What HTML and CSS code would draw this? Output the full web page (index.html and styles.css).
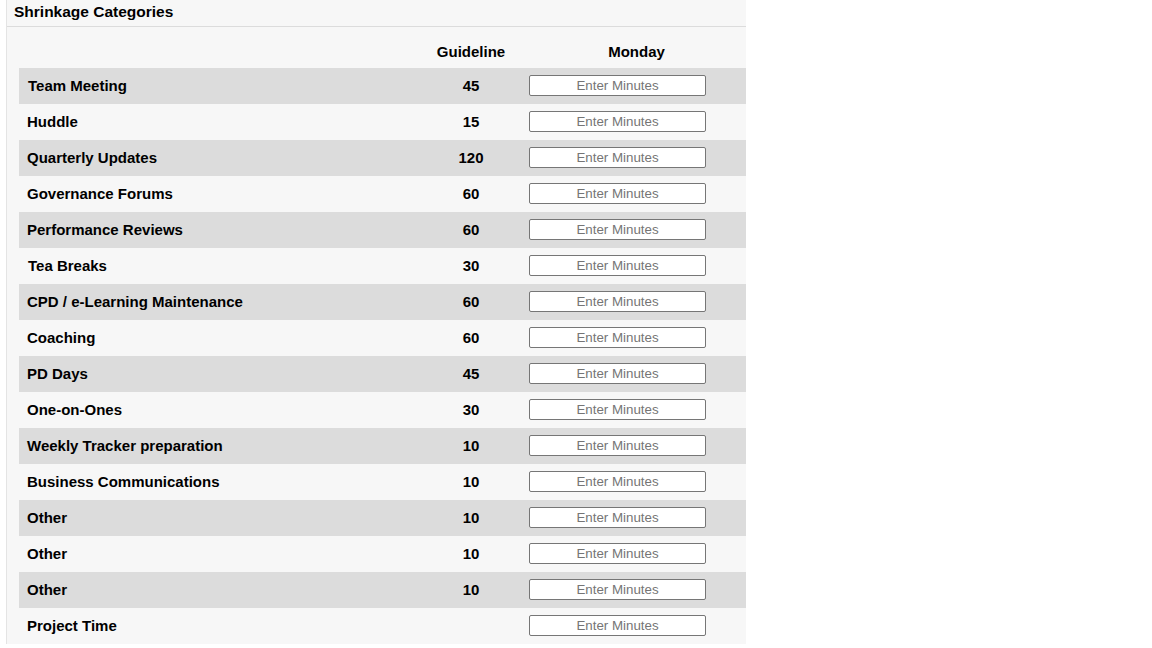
FILE: index.html
```html
<!DOCTYPE html>
<html>
<head>
<meta charset="utf-8">
<link rel="stylesheet" href="styles.css">
</head>
<body>
<div class="panel">
  <div class="panel-title">Shrinkage Categories</div>
  <div class="panel-body">
    <div class="grid">
      <div class="row head">
        <div class="c-name"></div>
        <div class="c-guide">Guideline</div>
        <div class="c-day">Monday</div>
      </div>
      <div class="row alt"><div class="c-name wide">Team Meeting</div><div class="c-guide">45</div><div class="c-input"><input type="text" placeholder="Enter Minutes"></div></div>
      <div class="row"><div class="c-name">Huddle</div><div class="c-guide">15</div><div class="c-input"><input type="text" placeholder="Enter Minutes"></div></div>
      <div class="row alt"><div class="c-name">Quarterly Updates</div><div class="c-guide">120</div><div class="c-input"><input type="text" placeholder="Enter Minutes"></div></div>
      <div class="row"><div class="c-name">Governance Forums</div><div class="c-guide">60</div><div class="c-input"><input type="text" placeholder="Enter Minutes"></div></div>
      <div class="row alt"><div class="c-name">Performance Reviews</div><div class="c-guide">60</div><div class="c-input"><input type="text" placeholder="Enter Minutes"></div></div>
      <div class="row"><div class="c-name wide">Tea Breaks</div><div class="c-guide">30</div><div class="c-input"><input type="text" placeholder="Enter Minutes"></div></div>
      <div class="row alt"><div class="c-name">CPD / e-Learning Maintenance</div><div class="c-guide">60</div><div class="c-input"><input type="text" placeholder="Enter Minutes"></div></div>
      <div class="row"><div class="c-name">Coaching</div><div class="c-guide">60</div><div class="c-input"><input type="text" placeholder="Enter Minutes"></div></div>
      <div class="row alt"><div class="c-name">PD Days</div><div class="c-guide">45</div><div class="c-input"><input type="text" placeholder="Enter Minutes"></div></div>
      <div class="row"><div class="c-name">One-on-Ones</div><div class="c-guide">30</div><div class="c-input"><input type="text" placeholder="Enter Minutes"></div></div>
      <div class="row alt"><div class="c-name">Weekly Tracker preparation</div><div class="c-guide">10</div><div class="c-input"><input type="text" placeholder="Enter Minutes"></div></div>
      <div class="row"><div class="c-name">Business Communications</div><div class="c-guide">10</div><div class="c-input"><input type="text" placeholder="Enter Minutes"></div></div>
      <div class="row alt"><div class="c-name">Other</div><div class="c-guide">10</div><div class="c-input"><input type="text" placeholder="Enter Minutes"></div></div>
      <div class="row"><div class="c-name">Other</div><div class="c-guide">10</div><div class="c-input"><input type="text" placeholder="Enter Minutes"></div></div>
      <div class="row alt"><div class="c-name">Other</div><div class="c-guide">10</div><div class="c-input"><input type="text" placeholder="Enter Minutes"></div></div>
      <div class="row"><div class="c-name">Project Time</div><div class="c-guide"></div><div class="c-input"><input type="text" placeholder="Enter Minutes"></div></div>
    </div>
  </div>
</div>
</body>
</html>
```

FILE: styles.css
```css
html, body {
  margin: 0;
  padding: 0;
  background: #ffffff;
}
body {
  font-family: "Liberation Sans", Arial, sans-serif;
  color: #000;
}
.panel {
  margin-left: 6px;
  width: 739px;
  background: #f7f7f7;
  border-left: 1px solid #e4e4e4;
}
.panel-title {
  height: 26px;
  line-height: 23px;
  padding-left: 7px;
  font-size: 15.5px;
  font-weight: bold;
  border-bottom: 1px solid #dcdcdc;
}
.panel-body {
  padding: 9px 0 0 12px;
}
.row {
  display: grid;
  grid-template-columns: 402px 100px 225px;
  height: 36px;
  align-items: center;
  font-size: 15px;
  font-weight: bold;
}
.row.head {
  height: 32px;
}
.row.alt {
  background: #dcdcdc;
}
.c-name,
.c-guide,
.c-day {
  padding-bottom: 2px;
}
.c-name {
  padding-left: 8px;
}
.c-name.wide {
  padding-left: 9px;
}
.c-guide {
  text-align: center;
}
.c-day {
  text-align: center;
  padding-left: 6px;
}
.c-input {
  padding-left: 8px;
  padding-bottom: 1px;
  display: flex;
  align-items: center;
}
.c-input input {
  width: 177px;
  height: 21px;
  box-sizing: border-box;
  border: 1px solid #767676;
  border-radius: 2px;
  background: #fff;
  font-family: "Liberation Sans", Arial, sans-serif;
  font-size: 13.333px;
  text-align: center;
  padding: 1px 2px;
  margin: 0;
}
.c-input input::placeholder {
  color: #757575;
}
```
